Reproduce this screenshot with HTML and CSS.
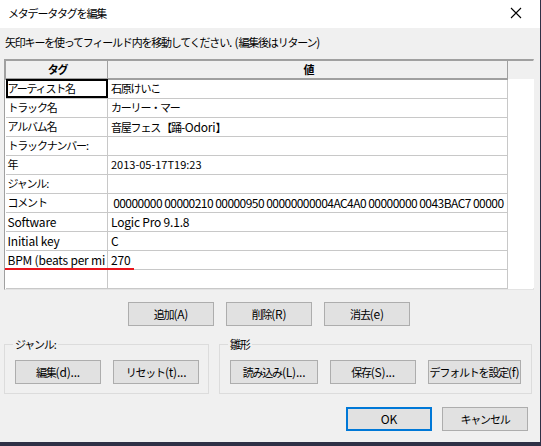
FILE: index.html
```html
<!DOCTYPE html>
<html lang="ja">
<head>
<meta charset="utf-8">
<link rel="stylesheet" href="styles.css">
</head>
<body>
<div class="window">
  <div class="titlebar">
    <span class="title">メタデータタグを編集</span>
    <svg class="close" width="12" height="12" viewBox="0 0 12 12"><path d="M1 1 L11 11 M11 1 L1 11" stroke="#000" stroke-width="1.1" fill="none"/></svg>
  </div>
  <div class="content">
    <div class="hint">矢印キーを使ってフィールド内を移動してください<span class="lat">. (</span>編集後はリターン<span class="lat">)</span></div>
    <div class="grid">
      <table class="tags">
        <colgroup><col class="c1"><col class="c2"><col class="c3"></colgroup>
        <thead>
          <tr><th>タグ</th><th>値</th><th class="fill"></th></tr>
        </thead>
        <tbody>
          <tr><td class="sel">アーティスト名</td><td>石原けいこ</td><td class="fill"></td></tr>
          <tr><td>トラック名</td><td>カーリー・マー</td><td class="fill"></td></tr>
          <tr><td>アルバム名</td><td>音屋フェス 【踊<span class="lat">-Odori</span>】</td><td class="fill"></td></tr>
          <tr><td>トラックナンバー:</td><td></td><td class="fill"></td></tr>
          <tr><td>年</td><td class="date">2013-05-17T19:23</td><td class="fill"></td></tr>
          <tr><td>ジャンル:</td><td></td><td class="fill"></td></tr>
          <tr><td>コメント</td><td class="lat cmt">&nbsp;00000000 00000210 00000950 00000000004AC4A0 00000000 0043BAC7 00000</td><td class="fill"></td></tr>
          <tr><td class="lat">Software</td><td class="lat">Logic Pro 9.1.8</td><td class="fill"></td></tr>
          <tr><td class="lat">Initial key</td><td class="lat">C</td><td class="fill"></td></tr>
          <tr><td class="lat">BPM (beats per mi</td><td class="lat">270</td><td class="fill"></td></tr>
          <tr><td></td><td></td><td class="fill"></td></tr>
        </tbody>
      </table>
      <div class="redline"></div>
    </div>
    <div class="actions">
      <button class="btn">追加<span class="lat">(A)</span></button>
      <button class="btn">削除<span class="lat">(R)</span></button>
      <button class="btn">消去<span class="lat">(e)</span></button>
    </div>
    <div class="groups">
      <fieldset class="group genre">
        <legend>ジャンル:</legend>
        <div class="gbtns">
          <button class="btn">編集<span class="lat">(d)...</span></button>
          <button class="btn">リセット<span class="lat">(t)...</span></button>
        </div>
      </fieldset>
      <fieldset class="group tmpl">
        <legend>雛形</legend>
        <div class="gbtns">
          <button class="btn w88">読み込み<span class="lat">(L)...</span></button>
          <button class="btn">保存<span class="lat">(S)...</span></button>
          <button class="btn w93">デフォルトを設定<span class="lat">(f)</span></button>
        </div>
      </fieldset>
    </div>
    <div class="footer">
      <button class="btn ok"><span class="lat">OK</span></button>
      <button class="btn">キャンセル</button>
    </div>
  </div>
</div>
</body>
</html>
```

FILE: styles.css
```css
* { box-sizing: border-box; }
html, body { margin: 0; padding: 0; }
body {
  background: #2f3046;
  width: 541px;
  height: 446px;
  overflow: hidden;
  font-family: "Noto Sans CJK JP", "Noto Sans", sans-serif;
  font-size: 11px;
  letter-spacing: -1.2px;
  color: #000;
}
.lat { font-size: 12px; letter-spacing: -0.2px; }
.window {
  width: 540px;
  height: 442px;
  background: #f0f0f0;
  display: flex;
  flex-direction: column;
}
.titlebar {
  height: 28px;
  background: #fff;
  display: flex;
  align-items: center;
  justify-content: space-between;
  padding: 0 18px 2px 8px;
}
.title { line-height: 16px; font-size: 11px; }
.close { display: block; }
.content {
  display: flex;
  flex-direction: column;
  padding: 0 0 0 4px;
}
.hint {
  line-height: 16px;
  padding: 6px 0 0 1px;
  height: 31px;
  white-space: nowrap;
}
.grid {
  position: relative;
  width: 530px;
  height: 231px;
  background: #fff;
  border-top: 2px solid #a0a0a0;
  border-left: 1px solid #a0a0a0;
  border-right: 1px solid #e3e3e3;
  border-bottom: 1px solid #e3e3e3;
}
.tags {
  border-collapse: collapse;
  table-layout: fixed;
  width: 528px;
}
.c1 { width: 102px; }
.c2 { width: 400px; }
.c3 { width: 26px; }
.tags th, .tags td {
  height: 19px;
  padding: 0 0 0 2px;
  line-height: 17px;
  border: 1px solid #c8c8c8;
  white-space: nowrap;
  overflow: hidden;
  text-overflow: clip;
  text-align: left;
}
.tags th {
  background: #f0f0f0;
  text-align: center;
  font-weight: bold;
  border-color: #a0a0a0;
  border-top: none;
  border-bottom: 2px solid #a0a0a0;
  height: 18px;
}
.tags th.fill { border: none; background: #f0f0f0; }
.tags td.fill { border: none; background: #fff; border-left: 1px solid #c8c8c8; }
.tags tbody tr:first-child td { border-top: none; }
.tags td:first-child { border-left: none; }
.tags td:nth-child(2) { padding-left: 3px; }
.tags td.sel { outline: 2px solid #000; outline-offset: -2px; }
.tags td.date { font-size: 11px; letter-spacing: 0; }
.tags td.cmt { letter-spacing: -0.55px; }
.redline {
  position: absolute;
  left: 0;
  top: 207px;
  width: 129px;
  height: 2px;
  background: #e8141c;
}
.btn {
  font-family: inherit;
  font-size: 11px;
  letter-spacing: -1.2px;
  height: 24px;
  width: 86px;
  padding: 0;
  background: #e1e1e1;
  border: 1px solid #adadad;
  color: #000;
  line-height: 20px;
  white-space: nowrap;
}
.actions {
  display: flex;
  gap: 12px;
  padding-left: 124px;
  margin-top: 12px;
}
.groups {
  display: flex;
  gap: 10px;
  margin-top: 10px;
}
.group {
  margin: 0;
  border: 1px solid #dcdcdc;
  padding: 8px 0 9px 10px;
}
.group legend {
  padding: 0 2px;
  margin-left: -2px;
  line-height: 16px;
}
.genre { width: 205px; }
.tmpl { width: 313px; }
.gbtns {
  display: flex;
  gap: 12px;
}
.w88 { width: 88px; }
.w93 { width: 93px; }
.footer {
  display: flex;
  justify-content: flex-end;
  gap: 10px;
  margin-top: 13px;
  padding-right: 12px;
}
.ok {
  width: 86px;
  border: 2px solid #0078d7;
}
```
